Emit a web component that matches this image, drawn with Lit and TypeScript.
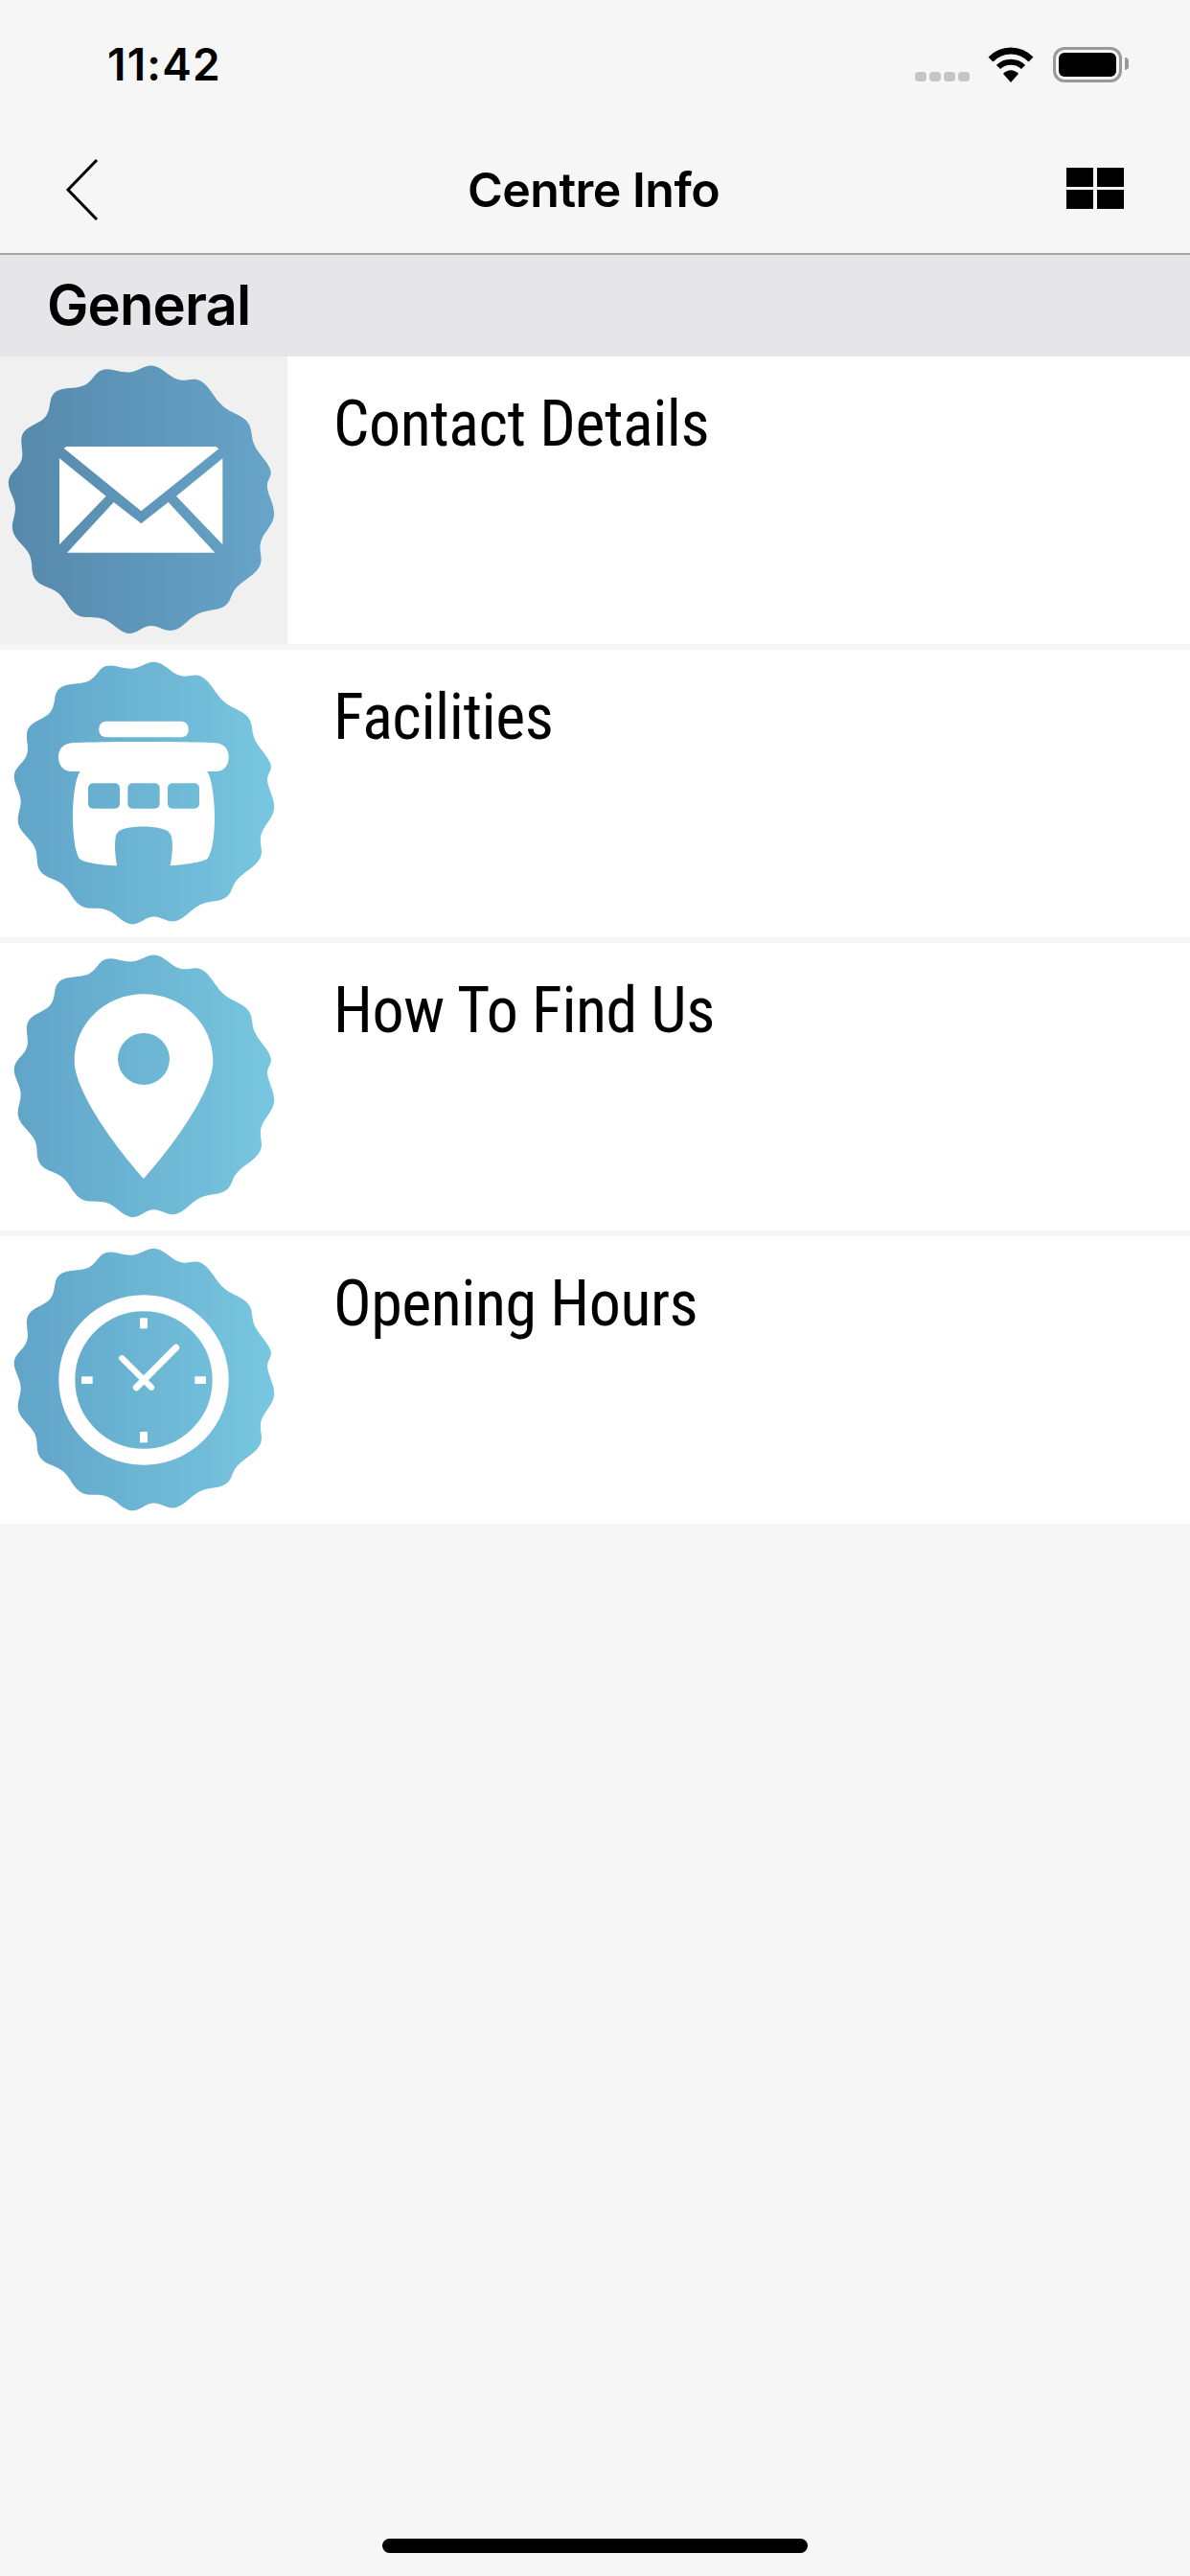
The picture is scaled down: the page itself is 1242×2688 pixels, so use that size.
import { LitElement, html, css, svg } from "lit";
import { customElement } from "lit/decorators.js";

// seal outline traced off the first icon, peaks and valleys, centred on 441,469
const sealPoints = [
  [405, 72], [480, 48], [555, 95], [630, 97], [695, 178], [775, 225], [795, 300], [848, 375],
  [835, 430], [860, 520], [815, 600], [815, 680], [740, 745], [705, 805], [620, 825], [545, 880],
  [470, 862], [400, 890], [325, 840], [240, 830], [185, 760], [110, 720], [95, 640], [40, 570],
  [50, 490], [25, 410], [70, 345], [70, 260], [145, 210], [170, 130], [265, 112], [320, 60],
];

function sealPath(cx: number, cy: number, scale: number) {
  const pts = sealPoints.map(([x, y]) => {
    // ease the traced points toward the mean radius, tracing by eye overshoots
    const dx = x - 441;
    const dy = y - 469;
    const r = Math.hypot(dx, dy);
    const k = ((408 + (r - 408) * 0.85) / r) * scale;
    return [cx + dx * k, cy + dy * k];
  });
  const n = pts.length;
  let d = `M${pts[0][0].toFixed(1)} ${pts[0][1].toFixed(1)}`;
  for (let i = 0; i < n; i++) {
    const p0 = pts[(i + n - 1) % n];
    const p1 = pts[i];
    const p2 = pts[(i + 1) % n];
    const p3 = pts[(i + 2) % n];
    const c1x = p1[0] + (p2[0] - p0[0]) / 5.4;
    const c1y = p1[1] + (p2[1] - p0[1]) / 5.4;
    const c2x = p2[0] - (p3[0] - p1[0]) / 5.4;
    const c2y = p2[1] - (p3[1] - p1[1]) / 5.4;
    d += `C${c1x.toFixed(1)} ${c1y.toFixed(1)} ${c2x.toFixed(1)} ${c2y.toFixed(1)} ${p2[0].toFixed(1)} ${p2[1].toFixed(1)}`;
  }
  return d + "Z";
}

const envelope = () => svg`
  <path d="M200 308L208 303H675L685 310L442 505Z" fill="#fff" />
  <path d="M186 340L332 458L186 610Z" fill="#fff" />
  <path d="M697 340L552 458L697 610Z" fill="#fff" />
  <path d="M210 635L356 477L442 544L527 477L673 635Z" fill="#fff" />
`;

const building = (fill: string) => svg`
  <rect x="310" y="233" width="280" height="50" rx="22" fill="#fff" />
  <path d="M225 301C300 296 600 296 675 301C702 303 716 320 716 345C716 372 700 390 675 390H648C660 400 672 470 672 530C672 590 665 640 650 662C640 672 590 680 533 685C540 650 542 620 537 595C532 578 520 572 500 568C470 561 425 561 395 568C378 572 366 578 362 595C358 620 360 650 366 685C310 682 260 675 248 662C235 640 228 590 228 530C228 470 238 400 252 390H225C200 390 183 372 183 345C183 320 198 303 225 301Z" fill="#fff" />
  <rect x="276" y="427" width="99" height="79" rx="15" fill=${fill} />
  <rect x="400" y="427" width="100" height="79" rx="15" fill=${fill} />
  <rect x="525" y="427" width="99" height="79" rx="15" fill=${fill} />
`;

const pin = () => svg`
  <path d="M450 172C570 172 667 265 667 380C667 480 530 660 450 750C370 660 233 480 233 380C233 265 330 172 450 172ZM450 294A81 81 0 1 0 450 456A81 81 0 1 0 450 294Z" fill="#fff" fill-rule="evenodd" />
`;

const clock = () => svg`
  <circle cx="450" cy="464" r="240.5" fill="none" stroke="#fff" stroke-width="51" />
  <rect x="438" y="270" width="24" height="33" fill="#fff" />
  <rect x="438" y="626" width="24" height="34" fill="#fff" />
  <rect x="255" y="453" width="35" height="23" fill="#fff" />
  <rect x="610" y="453" width="35" height="23" fill="#fff" />
  <path d="M427 487L551 363" stroke="#fff" stroke-width="21" stroke-linecap="round" />
  <path d="M382 396L474 487" stroke="#fff" stroke-width="19" stroke-linecap="round" />
`;

const rows = [
  { title: "Contact Details", glyph: envelope, box: 21, seal: [441, 469, 1], from: "#5688aa", to: "#67a5c9", selected: true },
  { title: "Facilities", glyph: building, box: 9, seal: [450, 458, 0.979], from: "#60a3c7", to: "#78c7e0", selected: false },
  { title: "How To Find Us", glyph: pin, box: 12, seal: [450, 460, 0.979], from: "#60a3c7", to: "#78c7e0", selected: false },
  { title: "Opening Hours", glyph: clock, box: 14, seal: [450, 463, 0.979], from: "#60a3c7", to: "#78c7e0", selected: false },
];

@customElement("app-root")
export class AppRoot extends LitElement {
  static styles = css`
    :host {
      display: flex;
      flex-direction: column;
      min-height: 2688px;
      background: #f6f6f6;
      color: #000;
      font-family: "Inter", "Liberation Sans", sans-serif;
    }
    .status {
      height: 132px;
      display: flex;
      justify-content: space-between;
      padding: 49px 71px 0 112px;
      box-sizing: border-box;
    }
    .time {
      font-size: 46px;
      line-height: 37px;
      font-weight: 600;
      letter-spacing: 1.2px;
    }
    .status-icons {
      display: flex;
      align-items: flex-start;
      height: 38px;
    }
    .dots {
      display: flex;
      gap: 3px;
      margin: 26px 19px 0 0;
    }
    .dots span {
      width: 12px;
      height: 10px;
      border-radius: 4px;
      background: #c4c4c4;
    }
    .battery {
      width: 72px;
      height: 37px;
      margin-left: 20px;
      padding: 3px;
      box-sizing: border-box;
      border: 3px solid #999;
      border-radius: 12px;
      position: relative;
    }
    .battery i {
      display: block;
      height: 100%;
      border-radius: 6px;
      background: #000;
    }
    .battery::after {
      content: "";
      position: absolute;
      right: -10px;
      top: 8px;
      width: 4px;
      height: 13px;
      border-radius: 0 6px 6px 0;
      background: #999;
    }
    .nav {
      height: 132px;
      display: grid;
      grid-template-columns: 1fr auto 1fr;
      align-items: center;
      padding: 0 69px 0 66px;
      border-bottom: 2px solid #a6a6a6;
    }
    .nav-title {
      font-size: 50px;
      font-weight: 600;
      letter-spacing: -0.5px;
    }
    .grid {
      justify-self: end;
      display: grid;
      grid-template-columns: 28px 28px;
      grid-auto-rows: 20px;
      gap: 3px 4px;
      margin-top: -3px;
    }
    .grid span {
      background: #000;
    }
    .section {
      height: 106px;
      box-sizing: border-box;
      display: flex;
      align-items: center;
      padding: 0 0 3px 49px;
      background: #e6e6e8;
      font-size: 58px;
      font-weight: 600;
      letter-spacing: -0.9px;
    }
    .list {
      display: flex;
      flex-direction: column;
      gap: 6px;
    }
    .row {
      height: 300px;
      display: flex;
      background: #fff;
    }
    .thumb {
      width: 300px;
      height: 300px;
      flex: none;
      display: block;
    }
    .row.selected .thumb {
      background: #f0f0f0;
    }
    .row-title {
      padding: 30px 0 0 48px;
      font-family: "Roboto", sans-serif;
      font-stretch: 75%;
      font-size: 66px;
      line-height: 82px;
      letter-spacing: -0.45px;
    }
    .spacer {
      flex: 1;
    }
    .home {
      width: 444px;
      height: 15px;
      margin: 0 auto 24px;
      border-radius: 8px;
      background: #000;
    }
  `;

  render() {
    return html`
      <div class="status">
        <div class="time">11:42</div>
        <div class="status-icons">
          <div class="dots"><span></span><span></span><span></span><span></span></div>
          <svg width="48" height="37" viewBox="0 0 48 37">
            <path d="M3 13C15 1 33 1 45 13" fill="none" stroke="#000" stroke-width="7" />
            <path d="M11 21C18 14 30 14 37 21" fill="none" stroke="#000" stroke-width="6" />
            <path d="M16 28C21 23 27 23 32 28L24 37Z" fill="#000" />
          </svg>
          <div class="battery"><i></i></div>
        </div>
      </div>
      <div class="nav">
        <svg width="38" height="64" viewBox="0 0 38 64">
          <path d="M35 1L5 32L35 63" fill="none" stroke="#000" stroke-width="3" />
        </svg>
        <div class="nav-title">Centre Info</div>
        <div class="grid"><span></span><span></span><span></span><span></span></div>
      </div>
      <div class="section">General</div>
      <div class="list">
        ${rows.map((r, i) => {
          const fill = `url(#seal-${i})`;
          return html`
            <div class="row ${r.selected ? "selected" : ""}">
              <svg class="thumb" viewBox="0 ${r.box} 900 900">
                <defs>
                  <linearGradient id="seal-${i}" gradientUnits="userSpaceOnUse" x1="20" x2="870" y1="0" y2="0">
                    <stop offset="0" stop-color=${r.from} />
                    <stop offset="1" stop-color=${r.to} />
                  </linearGradient>
                </defs>
                <path d=${sealPath(r.seal[0], r.seal[1], r.seal[2])} fill=${fill} />
                ${r.glyph(fill)}
              </svg>
              <div class="row-title">${r.title}</div>
            </div>
          `;
        })}
      </div>
      <div class="spacer"></div>
      <div class="home"></div>
    `;
  }
}
